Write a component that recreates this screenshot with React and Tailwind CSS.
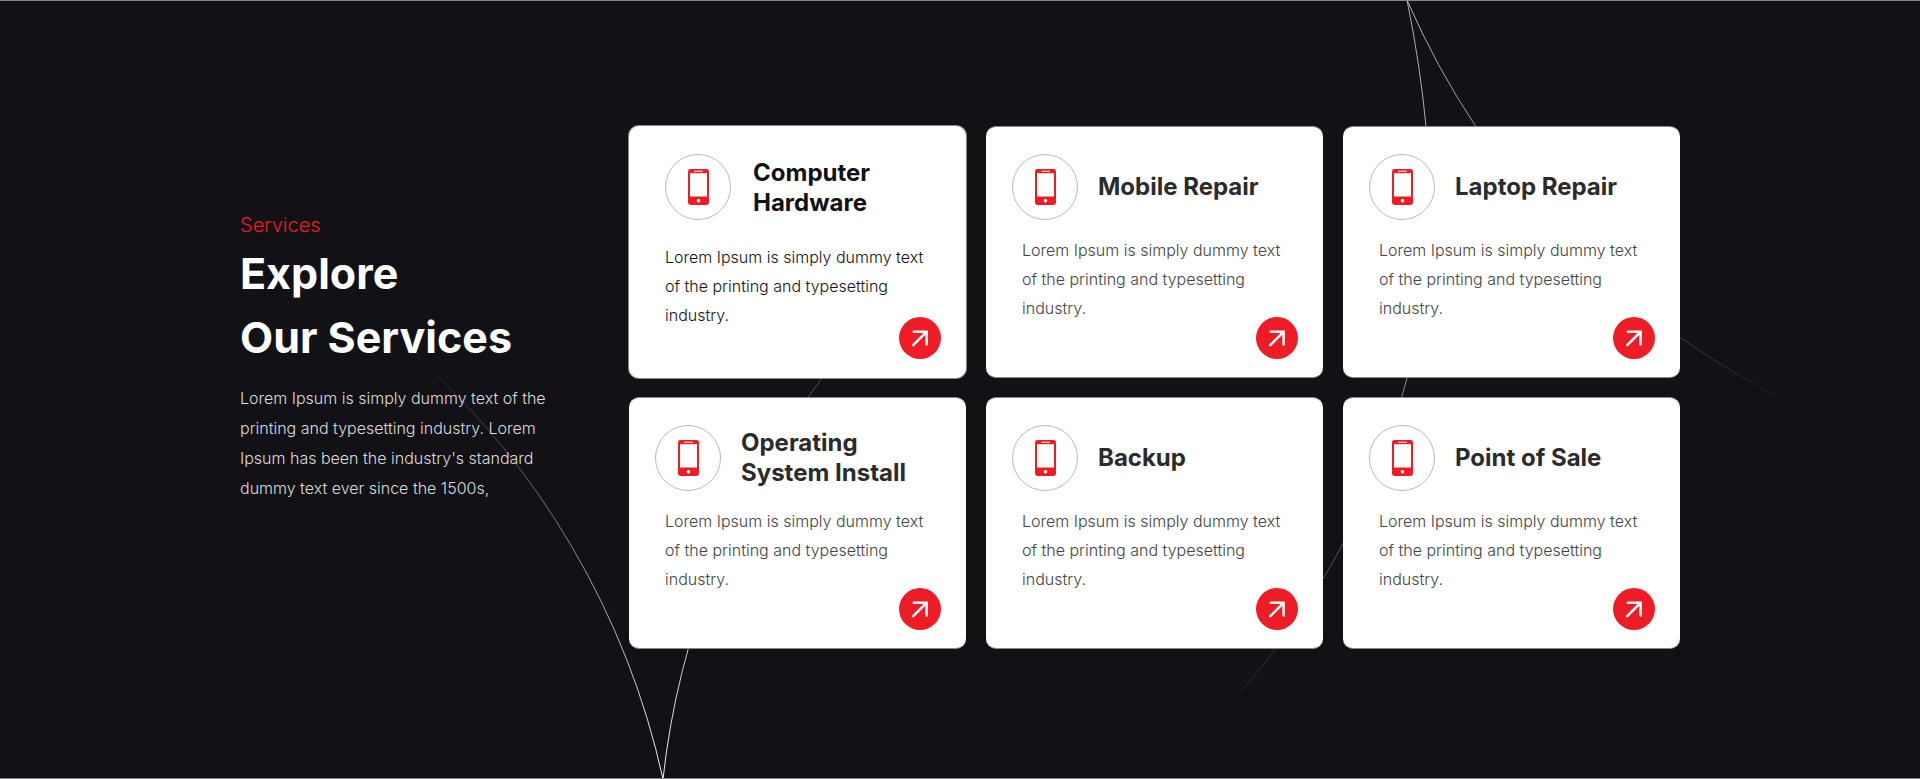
import React from "react";

const services = [
  { title: "Computer Hardware", active: true },
  { title: "Mobile Repair" },
  { title: "Laptop Repair" },
  { title: "Operating System Install" },
  { title: "Backup" },
  { title: "Point of Sale" },
];

const arcs = [
  { id: "arc-a", from: [405, 345], to: [663, 779], strength: 0.95, d: "M416 356A800 800 0 0 1 663 779" },
  { id: "arc-b", from: [890, 250], to: [663, 779], strength: 0.95, d: "M663 779A816 816 0 0 1 822 378" },
  {
    id: "arc-c",
    from: [1190, 742],
    to: [1360, 250],
    strength: 0.65,
    d: "M1407 0A1200 1200 0 0 1 1426 126A640 640 0 0 1 1407 378A760 760 0 0 1 1196 738",
  },
  { id: "arc-d", from: [1810, 416], to: [1407, 0], strength: 0.7, d: "M1407 0A810 810 0 0 0 1798 407" },
];

function Arcs() {
  return (
    <svg
      aria-hidden="true"
      className="pointer-events-none absolute inset-0 h-full w-full"
      viewBox="0 0 1920 779"
      preserveAspectRatio="xMidYMid slice"
      fill="none"
    >
      <defs>
        {arcs.map((a) => (
          <linearGradient
            key={a.id}
            id={a.id}
            gradientUnits="userSpaceOnUse"
            x1={a.from[0]}
            y1={a.from[1]}
            x2={a.to[0]}
            y2={a.to[1]}
          >
            <stop offset="0" stopColor="#fff" stopOpacity="0" />
            <stop offset="1" stopColor="#fff" stopOpacity={a.strength} />
          </linearGradient>
        ))}
      </defs>
      {arcs.map((a) => (
        <path key={a.id} d={a.d} stroke={`url(#${a.id})`} />
      ))}
    </svg>
  );
}

function PhoneIcon() {
  return (
    <svg aria-hidden="true" className="h-9 w-[21px]" viewBox="0 0 21 36">
      <rect width="21" height="36" rx="2.4" fill="#ee1c25" />
      <rect x="2" y="4.2" width="17" height="23.3" fill="#fff" />
      <rect x="6" y="1.7" width="9" height="1.1" rx="0.5" fill="#fff" />
      <circle cx="10.5" cy="31.7" r="1.8" fill="#fff" />
    </svg>
  );
}

function ArrowIcon() {
  return (
    <svg aria-hidden="true" className="size-[18px]" viewBox="0 0 18 18" fill="none" stroke="#fff" strokeWidth="2.5">
      <path d="M2.8 2.8H15.6V15.6" strokeLinejoin="miter" strokeLinecap="round" />
      <path d="M15 3.4L2.2 16.2" strokeLinecap="round" />
    </svg>
  );
}

function ServiceCard({ title, active }) {
  return (
    <article
      className={`relative min-h-[252px] rounded-[10px] border-y bg-white pt-[27px] ${
        active ? "border-white ring-1 ring-[#8a8a8c]" : "border-[#8a8a8c]"
      }`}
    >
      <header className={`flex items-center pr-4 ${active ? "gap-[22px] pl-9" : "gap-5 pl-[26px]"}`}>
        <span className="flex size-[66px] shrink-0 items-center justify-center rounded-full border border-[#b9b9ba]">
          <PhoneIcon />
        </span>
        <h3
          className={`max-w-[180px] text-2xl leading-[30px] font-bold ${
            active ? "pt-[2px] text-[#121116]" : "text-[#2b2b2b]"
          }`}
        >
          {title}
        </h3>
      </header>
      <p
        className={`pr-9 pl-9 text-base leading-[29px] font-light ${
          active ? "mt-[23px] text-[#121116]" : "mt-4 text-[#444]"
        }`}
      >
        Lorem Ipsum is simply dummy text of the printing and typesetting industry.
      </p>
      <a
        href="#"
        aria-label={title}
        className="absolute right-[25px] bottom-[18px] flex size-[42px] items-center justify-center rounded-full bg-[#ee1c25]"
      >
        <ArrowIcon />
      </a>
    </article>
  );
}

export default function App() {
  return (
    <section className="relative border-y border-[#88888a] bg-[#121116] px-6 pt-[125px] pb-[129px] font-['Inter','Liberation_Sans',sans-serif]">
      <Arcs />
      <div className="relative mx-auto flex max-w-[1440px] items-start">
        <div className="w-[389px] shrink-0 pt-[84px]">
          <p className="text-xl leading-[30px] font-light text-[#ee1c25]">Services</p>
          <h2 className="mt-px text-[43px] leading-16 font-bold text-white">
            Explore
            <br />
            Our Services
          </h2>
          <p className="mt-[14px] max-w-[320px] text-base leading-[30px] font-light text-[#dcdcdc]">
            Lorem Ipsum is simply dummy text of the printing and typesetting industry. Lorem Ipsum has been the
            industry's standard dummy text ever since the 1500s,
          </p>
        </div>
        <div className="grid flex-1 grid-cols-3 gap-x-5 gap-y-[19px]">
          {services.map((s) => (
            <ServiceCard key={s.title} {...s} />
          ))}
        </div>
      </div>
    </section>
  );
}
